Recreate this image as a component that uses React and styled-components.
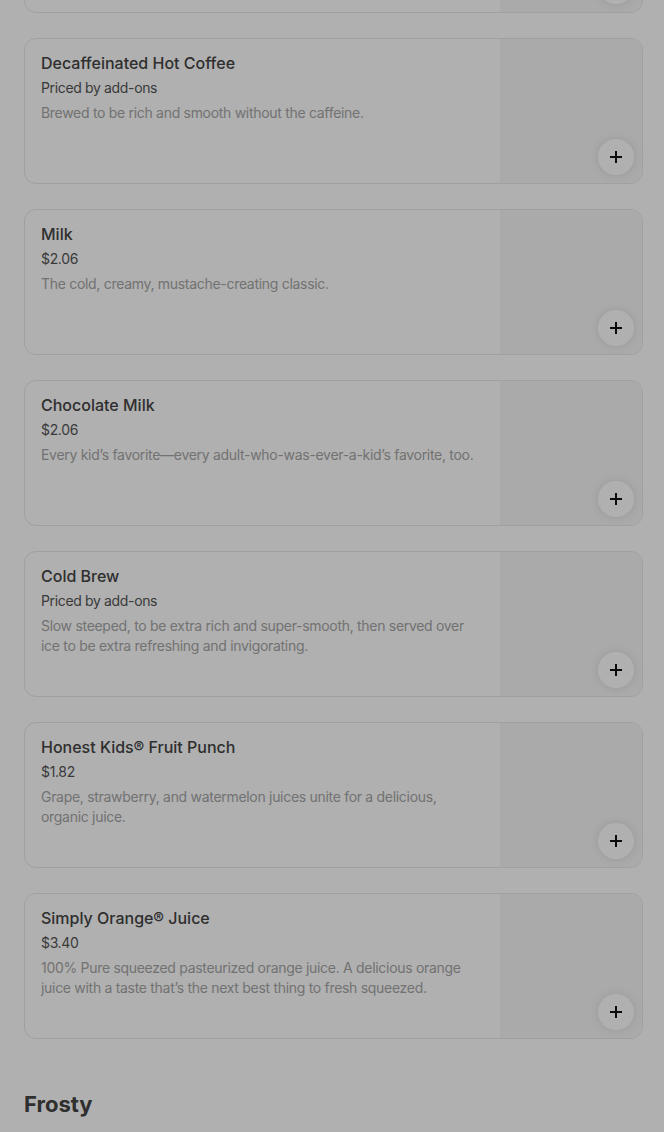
import React from 'react'
import styled, { createGlobalStyle } from 'styled-components'

const GlobalStyle = createGlobalStyle`
  html, body {
    margin: 0;
    padding: 0;
    background: #fff;
  }
  body {
    font-family: Inter, "Noto Sans", sans-serif;
    color: #000;
    overflow: hidden;
  }
`

const items = [
  { name: 'Decaffeinated Hot Coffee', price: 'Priced by add-ons', desc: 'Brewed to be rich and smooth without the caffeine.' },
  { name: 'Milk', price: '$2.06', desc: 'The cold, creamy, mustache-creating classic.' },
  { name: 'Chocolate Milk', price: '$2.06', desc: 'Every kid\u2019s favorite\u2014every adult-who-was-ever-a-kid\u2019s favorite, too.' },
  { name: 'Cold Brew', price: 'Priced by add-ons', desc: 'Slow steeped, to be extra rich and super-smooth, then served over ice to be extra refreshing and invigorating.' },
  { name: 'Honest Kids\u00ae Fruit Punch', price: '$1.82', desc: 'Grape, strawberry, and watermelon juices unite for a delicious, organic juice.' },
  { name: 'Simply Orange\u00ae Juice', price: '$3.40', desc: '100% Pure squeezed pasteurized orange juice. A delicious orange juice with a taste that\u2019s the next best thing to fresh squeezed.' },
]

function PlusIcon() {
  return (
    <svg width="14" height="14" viewBox="0 0 14 14">
      <path d="M6 1h2v5h5v2H8v5H6V8H1V6h5z" fill="#111" />
    </svg>
  )
}

function ItemCard({ item }) {
  return (
    <Card>
      <Info>
        {item && (
          <>
            <Title>{item.name}</Title>
            <Price>{item.price}</Price>
            <Desc>{item.desc}</Desc>
          </>
        )}
      </Info>
      <Thumb>
        <AddButton aria-label={item ? `Add ${item.name}` : 'Add'}>
          <PlusIcon />
        </AddButton>
      </Thumb>
    </Card>
  )
}

export default function App() {
  return (
    <>
      <GlobalStyle />
      <Page>
        <List>
          {/* card scrolled mostly out of view above */}
          <ItemCard />
          {items.map((item) => (
            <ItemCard key={item.name} item={item} />
          ))}
        </List>
        <SectionTitle>Frosty</SectionTitle>
      </Page>
      <Backdrop />
    </>
  )
}

const Page = styled.div`
  padding: 0 21px 40px 24px;
  margin-top: -133px;
`

const List = styled.div`
  display: flex;
  flex-direction: column;
  gap: 25px;
`

const Card = styled.div`
  display: flex;
  height: 146px;
  box-sizing: border-box;
  border: 1px solid #e8e8e8;
  border-radius: 12px;
  overflow: hidden;
  background: #fff;
`

const Info = styled.div`
  flex: 1;
  min-width: 0;
  padding: 14px 16px;
`

const Title = styled.div`
  font-size: 16px;
  line-height: 20px;
  font-weight: 500;
  color: #444;
  margin-bottom: 5px;
`

const Price = styled.div`
  font-size: 14px;
  line-height: 20px;
  letter-spacing: -0.35px;
  color: #555;
  margin-bottom: 5px;
`

const Desc = styled.div`
  font-size: 14px;
  line-height: 20px;
  letter-spacing: -0.3px;
  color: #a6a6a6;
`

const Thumb = styled.div`
  position: relative;
  width: 142px;
  flex-shrink: 0;
  background: #f6f6f6;
`

const AddButton = styled.button`
  position: absolute;
  right: 8px;
  bottom: 8px;
  width: 36px;
  height: 36px;
  border: none;
  border-radius: 50%;
  background: #fff;
  box-shadow: 0 0 10px rgba(0, 0, 0, 0.1);
  display: flex;
  align-items: center;
  justify-content: center;
  padding: 0;
  cursor: pointer;
`

const SectionTitle = styled.h2`
  margin: 0;
  padding-top: 49px;
  font-size: 22px;
  line-height: 32px;
  font-weight: 700;
  color: #444;
`

const Backdrop = styled.div`
  position: fixed;
  inset: 0;
  background: rgba(0, 0, 0, 0.31);
`
